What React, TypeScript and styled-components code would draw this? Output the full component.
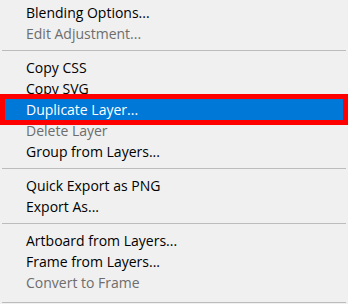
import React from 'react';
import styled, { createGlobalStyle } from 'styled-components';

type Entry =
  | { kind: 'item'; label: string; disabled?: boolean; active?: boolean }
  | { kind: 'separator' };

const entries: Entry[] = [
  { kind: 'item', label: 'Blending Options...' },
  { kind: 'item', label: 'Edit Adjustment...', disabled: true },
  { kind: 'separator' },
  { kind: 'item', label: 'Copy CSS' },
  { kind: 'item', label: 'Copy SVG' },
  { kind: 'item', label: 'Duplicate Layer...', active: true },
  { kind: 'item', label: 'Delete Layer', disabled: true },
  { kind: 'item', label: 'Group from Layers...' },
  { kind: 'separator' },
  { kind: 'item', label: 'Quick Export as PNG' },
  { kind: 'item', label: 'Export As...' },
  { kind: 'separator' },
  { kind: 'item', label: 'Artboard from Layers...' },
  { kind: 'item', label: 'Frame from Layers...' },
  { kind: 'item', label: 'Convert to Frame', disabled: true },
  { kind: 'separator' },
];

const App: React.FC = () => {
  return (
    <>
      <GlobalStyle />
      <Menu>
        {entries.map((entry, i) =>
          entry.kind === 'separator' ? (
            <Separator key={i} />
          ) : (
            <Item key={i} disabled={entry.disabled} active={entry.active}>
              {entry.label}
            </Item>
          )
        )}
      </Menu>
    </>
  );
};

const GlobalStyle = createGlobalStyle`
  html, body {
    margin: 0;
    padding: 0;
    background: #f0f0f0;
  }
  body {
    width: 348px;
    height: 304px;
    overflow: hidden;
  }
`;

const Menu = styled.div`
  display: flex;
  flex-direction: column;
  width: 348px;
  padding-top: 2px;
  background: #f0f0f0;
  font-family: 'Open Sans', 'Noto Sans', sans-serif;
  font-size: 14px;
`;

const Item = styled.div.withConfig({
  shouldForwardProp: (prop) => !['disabled', 'active'].includes(prop),
})<{ disabled?: boolean; active?: boolean }>`
  height: 21px;
  line-height: 21px;
  padding-left: ${(props) => (props.active ? '21px' : '26px')};
  margin: ${(props) => (props.active ? '0 5px' : '0')};
  white-space: nowrap;
  color: ${(props) => (props.active ? '#ffffff' : props.disabled ? '#6d6d6d' : '#000000')};
  background: ${(props) => (props.active ? '#0078d7' : 'transparent')};
  box-shadow: ${(props) => (props.active ? '0 0 0 5px #ff0000' : 'none')};
  position: ${(props) => (props.active ? 'relative' : 'static')};
`;

const Separator = styled.div`
  height: 1px;
  margin: 6px 2px;
  background: #bcbcbc;

  &:last-child {
    margin-top: 9px;
  }
`;

export default App;
